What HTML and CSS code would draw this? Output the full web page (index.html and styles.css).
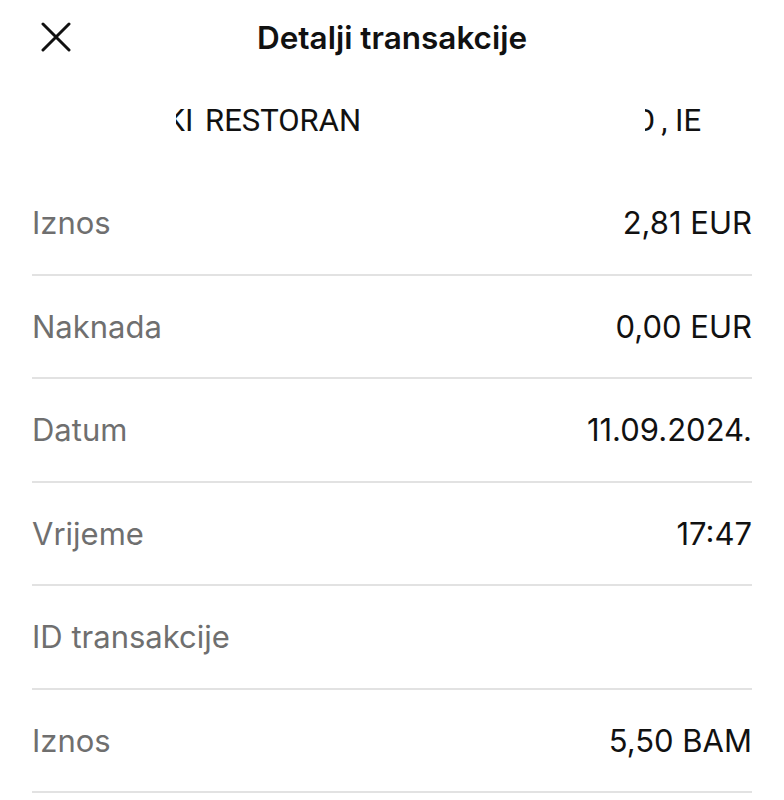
FILE: index.html
```html
<!DOCTYPE html>
<html lang="bs">
<head>
<meta charset="utf-8">
<link rel="stylesheet" href="styles.css">
</head>
<body>
<div class="screen">
  <header class="header">
    <button class="close" aria-label="Zatvori">
      <svg width="30" height="30" viewBox="0 0 30 30"><path d="M2 2 L28 28 M28 2 L2 28" stroke="#111" stroke-width="3" stroke-linecap="round" fill="none"/></svg>
    </button>
    <h1 class="title">Detalji transakcije</h1>
    <span></span>
  </header>
  <div class="merchant">
    <span class="clip clip-left"><span>SKI RESTORAN</span></span>
    <span class="clip clip-right"><span><span class="cut">O</span>, IE</span></span>
  </div>
  <div class="rows">
    <div class="row"><span class="label">Iznos</span><span class="value">2,81 EUR</span></div>
    <div class="row"><span class="label">Naknada</span><span class="value">0,00 EUR</span></div>
    <div class="row"><span class="label">Datum</span><span class="value">11.09.2024.</span></div>
    <div class="row"><span class="label">Vrijeme</span><span class="value">17:47</span></div>
    <div class="row"><span class="label">ID transakcije</span><span class="value"></span></div>
    <div class="row"><span class="label">Iznos</span><span class="value">5,50 BAM</span></div>
  </div>
</div>
</body>
</html>
```
FILE: styles.css
```css
html, body {
  margin: 0;
  padding: 0;
  background: #fff;
}
body {
  font-family: Inter, "Noto Sans", sans-serif;
  color: #111;
  width: 784px;
  height: 800px;
  overflow: hidden;
}
.header {
  display: grid;
  grid-template-columns: 1fr auto 1fr;
  align-items: center;
  height: 74px;
  padding: 0 41px;
}
.close {
  background: none;
  border: 0;
  padding: 0;
  width: 30px;
  height: 30px;
  display: flex;
}
.title {
  margin: 0;
  font-size: 31.5px;
  font-weight: 600;
  letter-spacing: 0;
}
.merchant {
  box-sizing: border-box;
  height: 98px;
  padding: 0 0 5px 176px;
  display: flex;
  align-items: center;
  font-family: Roboto, "Noto Sans", sans-serif;
  font-size: 31px;
  color: #111;
}
.clip {
  display: flex;
  justify-content: flex-end;
  overflow: hidden;
  white-space: nowrap;
}
.clip-left {
  width: 185px;
  word-spacing: 4px;
}
.clip-right {
  width: 56px;
  margin-left: 284px;
}
.cut {
  margin-right: 6px;
}
.rows {
  padding: 0 32px;
}
.row {
  height: 101.5px;
  border-bottom: 2px solid #e2e2e2;
  display: flex;
  align-items: center;
  justify-content: space-between;
  font-size: 31px;
}
.label {
  color: #6f6f6f;
}
.value {
  color: #111;
}
```
